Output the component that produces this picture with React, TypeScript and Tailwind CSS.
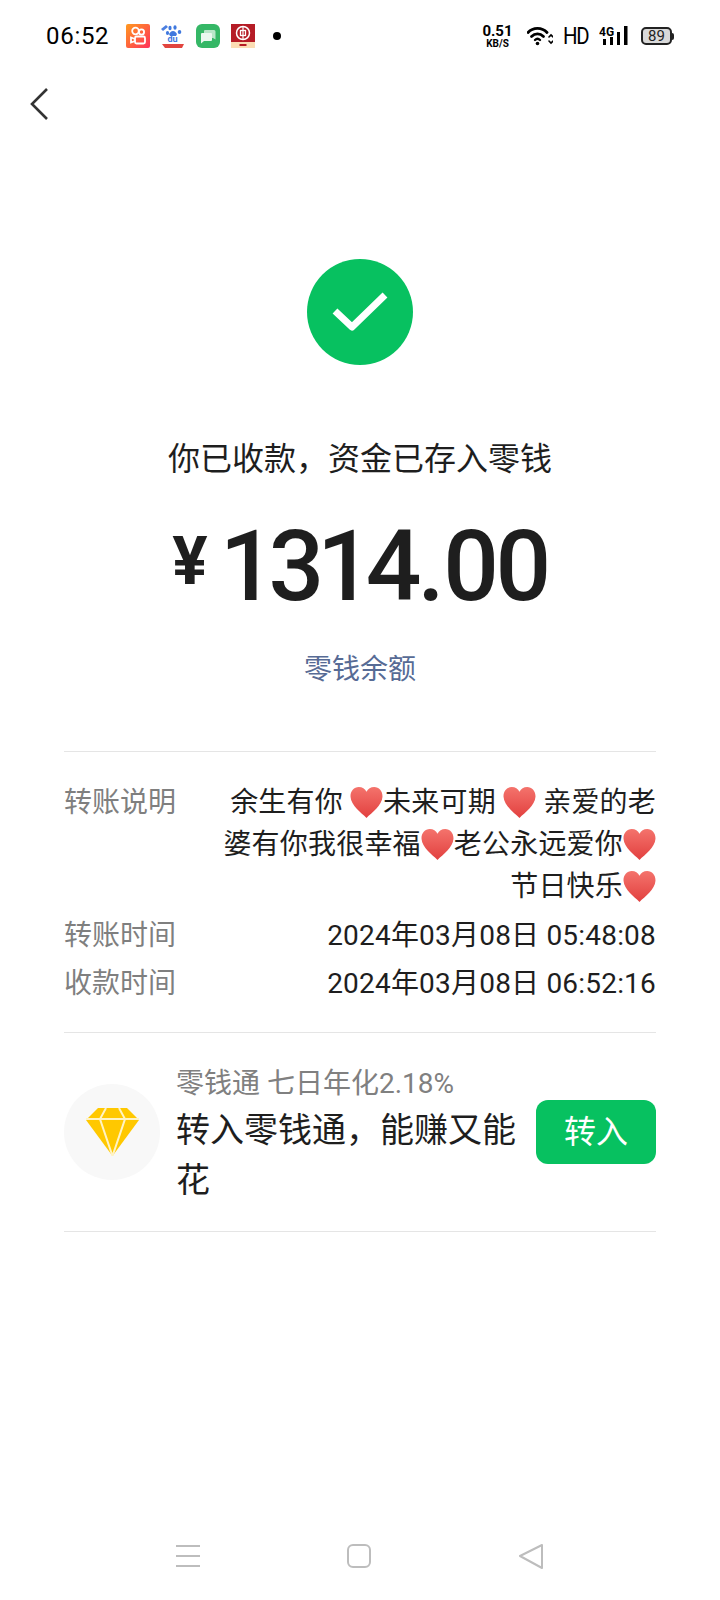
const Heart = () => (
  <svg viewBox="0 0 32 32" className="inline-block w-[33px] h-[33px] align-[-7px]">
    <defs>
      <linearGradient id="heartFill" x1="0" y1="0" x2="0" y2="1">
        <stop offset="0" stopColor="#F4736C" />
        <stop offset="1" stopColor="#E2403F" />
      </linearGradient>
    </defs>
    <path
      d="M16 31C11 26 1 19 .5 10.500 .2 5 4 1 8.500 1 12 1 14.500 3 16 5.500 17.500 3 20 1 23.500 1 28 1 31.800 5 31.500 10.500 31 19 21 26 16 31Z"
      fill="url(#heartFill)"
    />
  </svg>
);

const AppIcons = () => (
  <div className="flex items-center gap-[11px] ml-[17px]">
    <svg viewBox="0 0 24 24" className="w-[24px] h-[24px]">
      <defs>
        <linearGradient id="kwai" x1="0" y1="0" x2="1" y2="1">
          <stop offset="0" stopColor="#FF9A1F" />
          <stop offset="1" stopColor="#FF2F5B" />
        </linearGradient>
      </defs>
      <rect width="24" height="24" rx="2" fill="url(#kwai)" />
      <g fill="none" stroke="#fff" strokeWidth="1.800">
        <circle cx="9.500" cy="7" r="3.300" />
        <circle cx="15.500" cy="8" r="2.600" />
        <rect x="9" y="12.500" width="10" height="7" rx="1.500" />
        <path d="M9 15l-4-1.500v5L9 17" />
      </g>
    </svg>
    <svg viewBox="0 0 24 24" className="w-[24px] h-[24px]">
      <rect width="24" height="24" rx="3" fill="#fff" />
      <path d="M0 5L5 1l2 2-5 4Z" fill="#4C7FE0" />
      <g fill="#3F78DE">
        <ellipse cx="9" cy="4" rx="1.600" ry="2.200" />
        <ellipse cx="14" cy="3.500" rx="1.600" ry="2.200" />
        <ellipse cx="6.500" cy="9" rx="1.600" ry="2" />
        <ellipse cx="18.500" cy="8" rx="1.800" ry="2" />
        <path d="M12 7c2 0 3 1.500 4 3l-1 2H9L8 10c1-1.500 2-3 4-3Z" />
      </g>
      <text x="6.500" y="18" fontSize="9" fontWeight="700" fontFamily="Roboto" fill="#3F78DE">du</text>
      <path d="M1 20h22l-2 4H4Z" fill="#E2453F" />
    </svg>
    <svg viewBox="0 0 24 24" className="w-[24px] h-[24px]">
      <rect width="24" height="24" rx="6" fill="#35B766" />
      <path d="M9 6h9a1.500 1.500 0 011.500 1.500v8L17 14H9a1 1 0 01-1-1V7a1 1 0 011-1Z" fill="#B9E6C9" />
      <path d="M6 9h9a1 1 0 011 1v6a1 1 0 01-1 1H8l-3 2.500V10a1 1 0 011-1Z" fill="#EAF8EF" />
    </svg>
    <svg viewBox="0 0 24 24" className="w-[24px] h-[24px]">
      <rect width="24" height="24" fill="#B51C26" />
      <rect y="18" width="24" height="6" fill="#FBDDB4" />
      <circle cx="12" cy="9" r="6.500" fill="none" stroke="#fff" strokeWidth="1.500" />
      <rect x="9.500" y="6.500" width="5" height="5" fill="none" stroke="#fff" strokeWidth="1.300" />
      <path d="M12 2.500v13" stroke="#fff" strokeWidth="1.200" />
      <rect x="8.500" y="20" width="7" height="2" fill="#B51C26" />
    </svg>
    <div className="w-[8px] h-[8px] rounded-full bg-black ml-[7px]" />
  </div>
);

const StatusRight = () => (
  <div className="flex items-center text-black">
    <div className="flex flex-col items-center w-[31px] font-bold">
      <span className="text-[15px] leading-[14px]">0.51</span>
      <span className="text-[10px] leading-[11px]">KB/S</span>
    </div>
    <svg viewBox="0 0 26 20" className="w-[26px] h-[20px] ml-[14px]" fill="none" stroke="#000" strokeLinecap="round">
      <path d="M1 6.500C6 1 15 1 20 6.500" strokeWidth="2.800" />
      <path d="M4.500 10.500C8 7 13 7 16.500 10.500" strokeWidth="2.800" />
      <path d="M8 14c1.500-1.500 3.500-1.500 5 0" strokeWidth="2.400" />
      <circle cx="10.500" cy="17.500" r="1.800" fill="#000" stroke="none" />
      <path d="M22 11l2-2 2 2M22 15l2 2 2-2" strokeWidth="1.600" />
    </svg>
    <span className="text-[24px] leading-none ml-[10px] w-[24px] tracking-[-1.500px] scale-x-[0.85] origin-left">HD</span>
    <svg viewBox="0 0 30 20" className="w-[30px] h-[20px] ml-[12px]">
      <text x="0" y="10" fontSize="12" fontWeight="700" fontFamily="Roboto" fill="#000">4G</text>
      <rect x="4" y="13" width="3" height="6" fill="#000" />
      <rect x="11" y="11" width="3" height="8" fill="#000" />
      <rect x="18" y="6" width="3" height="13" fill="#000" />
      <rect x="25" y="0" width="3.500" height="19" fill="#000" />
    </svg>
    <div className="flex items-center ml-[12px]">
      <div className="w-[31px] h-[18px] rounded-[5px] border-2 border-[#222] bg-[#D9D9D9] flex items-center justify-center text-[15px] leading-none text-[#222]">
        89
      </div>
      <div className="w-[2px] h-[7px] bg-[#222] rounded-r-sm" />
    </div>
  </div>
);

const InfoRow = ({ label, children }: { label: string; children: React.ReactNode }) => (
  <div className="flex justify-between">
    <span className="text-[#7F7F7F] shrink-0">{label}</span>
    <div className="text-[#1E1E1E] text-right tracking-[0.2px]">{children}</div>
  </div>
);

export default function App() {
  return (
    <div
      className="w-[720px] h-[1600px] bg-white flex flex-col"
      style={{ fontFamily: 'Roboto, "Noto Sans CJK SC", sans-serif' }}
    >
      <div className="h-[72px] flex items-center justify-between pl-[46px] pr-[46px] shrink-0">
        <div className="flex items-center">
          <span className="text-[24px] tracking-[0.7px] text-black">06:52</span>
          <AppIcons />
        </div>
        <StatusRight />
      </div>

      <div className="h-[32px] mt-[16px] pl-[30px] shrink-0">
        <svg viewBox="0 0 18 32" className="w-[18px] h-[32px]" fill="none" stroke="#333" strokeWidth="2.600">
          <path d="M17 1L2 16l15 15" />
        </svg>
      </div>

      <div className="flex flex-col items-center mt-[139px]">
        <div className="w-[106px] h-[106px] rounded-full bg-[#07C160] flex items-center justify-center">
          <svg viewBox="0 0 56 42" className="w-[56px] h-[42px]" fill="none" stroke="#fff" strokeWidth="7" strokeLinejoin="round">
            <path d="M3 20l17 16L53 4" />
          </svg>
        </div>
        <div className="mt-[72px] text-[32px] leading-[44px] text-[#1E1E1E]">你已收款，资金已存入零钱</div>
        <div className="mt-[31px] flex items-start text-[#1E1E1E] h-[110px]">
          <span className="text-[66px] leading-[66px] font-bold mt-[17px] mr-[12px]">¥</span>
          <span className="text-[98px] leading-[110px] font-medium">
            <span className="tracking-[-7px]">1314</span>
            <span className="tracking-[-4.500px] ml-[3px] mr-[3px]">.</span>
            <span className="tracking-[-3.500px]">00</span>
          </span>
        </div>
        <div className="mt-[28px] text-[28px] leading-[40px] text-[#576B95]">零钱余额</div>
      </div>

      <div className="mx-[64px] mt-[61px] border-t border-[#E5E5E5] pt-[30px] pb-[27px] text-[28px] leading-[42px] flex flex-col gap-[6px]">
        <div className="mb-[1px]">
          <InfoRow label="转账说明">
            <div>
              余生有你 <Heart />未来可期 <Heart /> 亲爱的老
            </div>
            <div>
              婆有你我很幸福<Heart />老公永远爱你<Heart />
            </div>
            <div>
              节日快乐<Heart />
            </div>
          </InfoRow>
        </div>
        <InfoRow label="转账时间">2024年03月08日 05:48:08</InfoRow>
        <InfoRow label="收款时间">2024年03月08日 06:52:16</InfoRow>
      </div>

      <div className="mx-[64px] border-y border-[#E5E5E5] h-[200px] flex items-center">
        <div className="w-[96px] h-[96px] rounded-full bg-[#F8F8F8] flex items-center justify-center shrink-0">
          <svg viewBox="0 0 53 48" className="w-[53px] h-[48px]">
            <path d="M12 0h29l12 12-26.500 36L0 12Z" fill="#FFC800" />
            <path
              d="M0 11h53M20 0l-6 11 12.500 37L39 11 33 0"
              fill="none"
              stroke="#FFF3C4"
              strokeWidth="2"
            />
          </svg>
        </div>
        <div className="ml-[16px] w-[345px] shrink-0 pt-[6px]">
          <div className="text-[28px] leading-[38px] text-[#808080]">零钱通 七日年化2.18%</div>
          <div className="text-[34px] leading-[50px] text-[#1E1E1E] mt-[2px]">转入零钱通，能赚又能花</div>
        </div>
        <div className="ml-auto w-[120px] h-[64px] rounded-[12px] bg-[#07C160] flex items-center justify-center text-white text-[32px]">
          转入
        </div>
      </div>

      <div className="mt-auto h-[62px] pb-[27px] flex items-center justify-between pl-[176px] pr-[176px]">
        <div className="flex flex-col gap-[8px] w-[24px]">
          <div className="h-[2px] bg-[#BDBDBD]" />
          <div className="h-[2px] bg-[#BDBDBD]" />
          <div className="h-[2px] bg-[#BDBDBD]" />
        </div>
        <div className="w-[24px] h-[24px] rounded-[6px] border-2 border-[#BDBDBD]" />
        <svg viewBox="0 0 26 26" className="w-[26px] h-[26px]" fill="none" stroke="#BDBDBD" strokeWidth="2" strokeLinejoin="round">
          <path d="M24 2L2 13l22 12Z" />
        </svg>
      </div>
    </div>
  );
}
